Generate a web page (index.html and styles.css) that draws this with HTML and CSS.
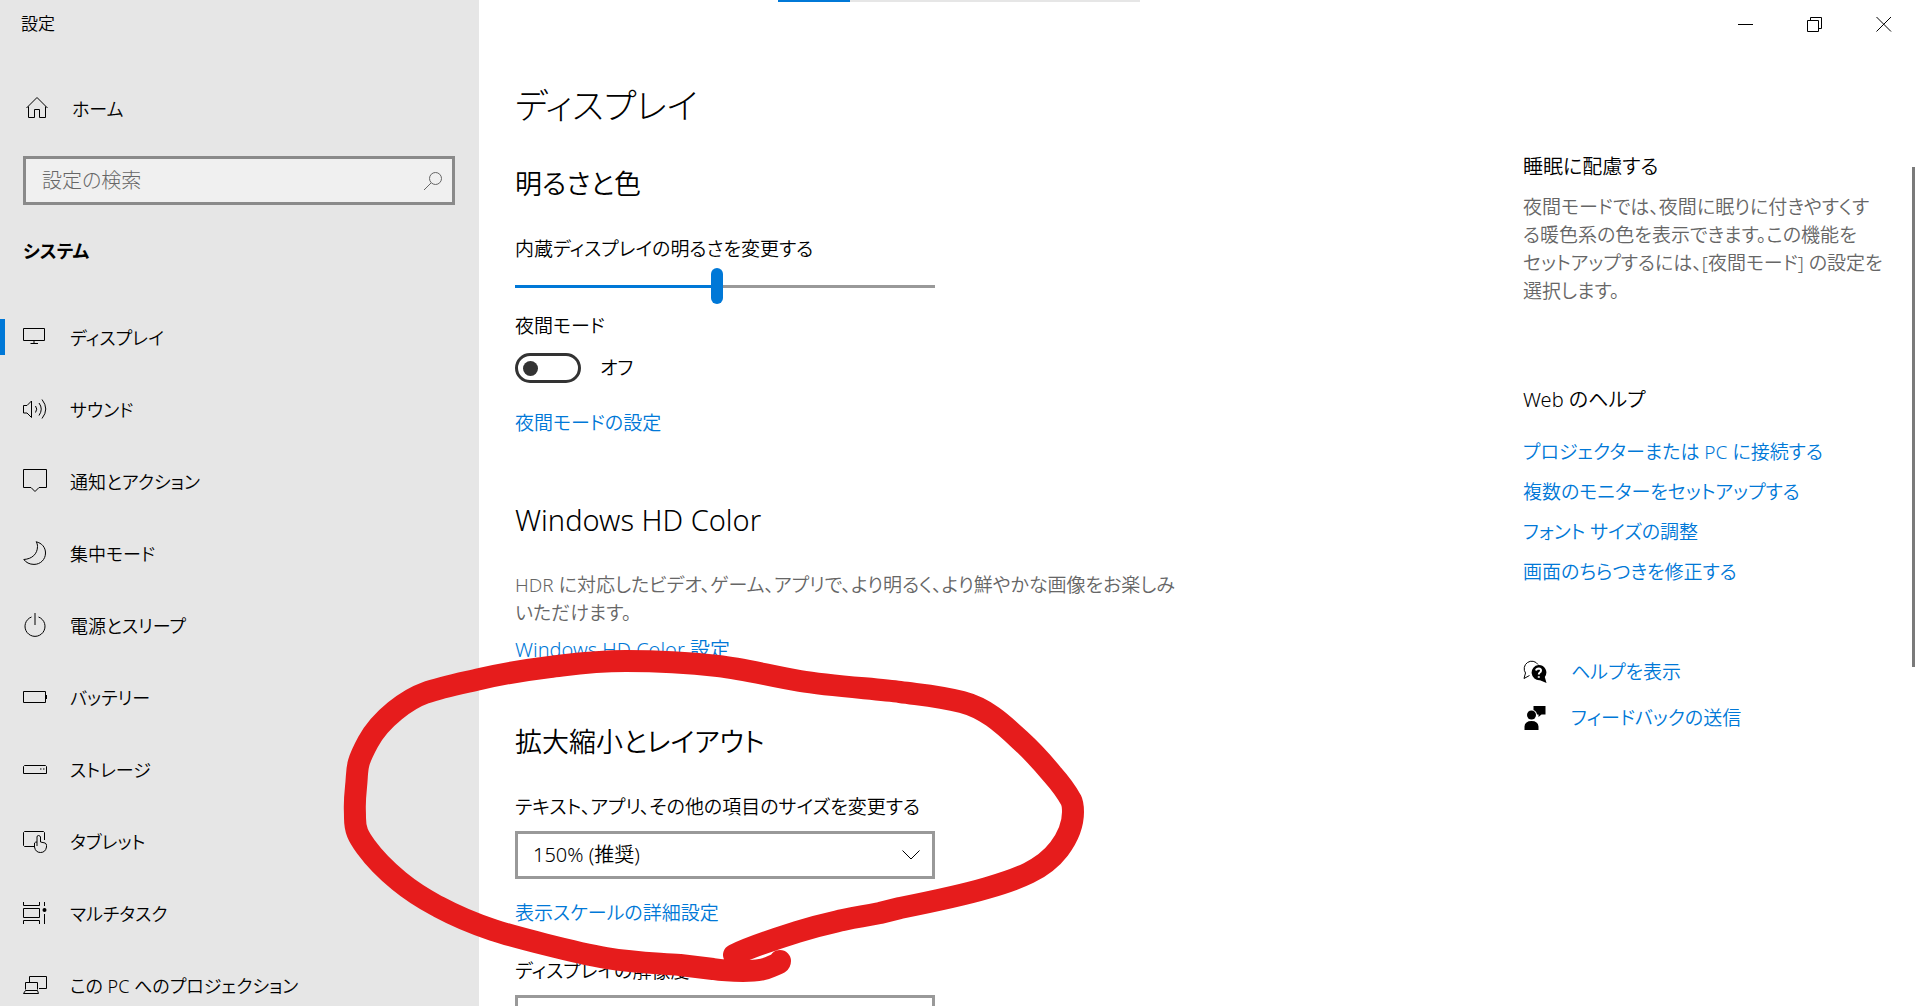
FILE: index.html
```html
<!DOCTYPE html>
<html lang="ja">
<head>
<meta charset="utf-8">
<meta name="viewport" content="width=device-width, initial-scale=1">
<title>設定</title>
<link rel="stylesheet" href="styles.css">
</head>
<body>
<div class="window">
  <aside class="sidebar">
    <div class="app-title">設定</div>
    <a class="home" href="#home">
      <svg class="icon" viewBox="0 0 24 24"><path d="M1.500 12 12 1.500 22.500 12M3.500 10.500V21.500H9.500V13.500H14.500V21.500H20.500V10.500"/></svg>
      <span>ホーム</span>
    </a>
    <div class="search">
      <input class="search-input" type="text" placeholder="設定の検索" aria-label="設定の検索">
      <svg class="search-icon" viewBox="0 0 20 20"><circle cx="12.500" cy="7.500" r="6"/><path d="M8 12 1 19"/></svg>
    </div>
    <h2 class="category">システム</h2>
    <nav class="nav">
      <a class="nav-item active" href="#display"><svg class="icon" viewBox="0 0 24 24"><path d="M.5 3.500H21.500V15.500H.5ZM11 15.500V18.500M7.500 18.500H15"/></svg><span>ディスプレイ</span></a>
      <a class="nav-item" href="#sound"><svg class="icon" viewBox="0 0 24 24"><path d="M.5 8.500H4L8.500 4V20.500L4 16H.5ZM12.500 9Q15 12 12.500 15.500M16 6Q20.500 12 16 18.500M19 2.500Q26.500 12 19 21.500"/></svg><span>サウンド</span></a>
      <a class="nav-item" href="#notifications"><svg class="icon" viewBox="0 0 24 24"><path d="M.5 .5H23.500V18.500H16L12 22.500 8 18.500H.5Z"/></svg><span>通知とアクション</span></a>
      <a class="nav-item" href="#focus"><svg class="icon" viewBox="0 0 24 24"><path d="M13 .8C19 2 22.500 6.500 22.500 12 22.500 18.500 17.500 23.400 11 23.400 6.500 23.400 3 21.500 .8 18.500 9 18 14.500 13 14.500 5.500 14.500 3.500 14 2 13 .8Z"/></svg><span>集中モード</span></a>
      <a class="nav-item" href="#power"><svg class="icon" viewBox="0 0 24 24"><path d="M12 0V12M8.500 4A10 10 0 1 0 15.500 4"/></svg><span>電源とスリープ</span></a>
      <a class="nav-item" href="#battery"><svg class="icon" viewBox="0 0 24 24"><path d="M.5 6.500H22.500V17.500H.5Z"/><path d="M23.500 10V14" /></svg><span>バッテリー</span></a>
      <a class="nav-item" href="#storage"><svg class="icon" viewBox="0 0 24 24"><path d="M1.500 8.500H22.500L23.500 9.500V16.500H.5V9.500ZM17 12H18.500M20 12H21.500"/></svg><span>ストレージ</span></a>
      <a class="nav-item" href="#tablet"><svg class="icon" viewBox="0 0 24 24"><path d="M11 17.500H1.500L.5 16.500V3.500L1.500 2.500H20.500L21.500 3.500V11M14 17V8Q14 6.500 15.500 6.500T17.500 8V13L22 14Q23.500 14.500 23.500 16.500V18Q22.500 23.500 17.500 23.500 12.500 23.500 11.500 18V14Q12 13 14 13"/></svg><span>タブレット</span></a>
      <a class="nav-item" href="#multitask"><svg class="icon" viewBox="0 0 24 24"><path d="M.5 1V4.500H16.500V1M.5 7.500H16.500V16.500H.5ZM.5 23V19.500H16.500V23M21.500 1V5M21.500 13V23"/><circle class="solid" cx="21.500" cy="9" r="2"/></svg><span>マルチタスク</span></a>
      <a class="nav-item" href="#projection"><svg class="icon" viewBox="0 0 24 24"><path d="M6.500 9V3.500H23.500V15.500H16M2.500 16.500V9.500H14.500V16.500M2.500 17.500H14.500L15.500 20.500H.5Z"/></svg><span>この PC へのプロジェクション</span></a>
    </nav>
  </aside>

  <div class="content">
    <div class="progress"><div class="progress-value"></div></div>
    <div class="caption-buttons">
      <button class="caption" type="button" aria-label="最小化"><svg viewBox="0 0 16 16"><path d="M0 8.500H15"/></svg></button>
      <button class="caption" type="button" aria-label="元に戻す"><svg viewBox="0 0 16 16"><path d="M.5 4.500H11.500V15.500H.5ZM3.500 4V1.500H14.500V12.500H12"/></svg></button>
      <button class="caption" type="button" aria-label="閉じる"><svg viewBox="0 0 16 16"><path d="M.5 1 15 15.500M15 1 .5 15.500"/></svg></button>
    </div>

    <div class="columns">
      <main class="main">
        <h1 class="page-title">ディスプレイ</h1>

        <section class="section brightness">
          <h2 class="section-title">明るさと色</h2>
          <label class="label" for="brightness">内蔵ディスプレイの明るさを変更する</label>
          <input class="slider" id="brightness" type="range" min="0" max="100" value="48">
          <div class="label" id="night-label">夜間モード</div>
          <div class="toggle-row">
            <input class="toggle" id="night" type="checkbox" aria-labelledby="night-label">
            <label for="night">オフ</label>
          </div>
          <a class="link" href="#night">夜間モードの設定</a>
        </section>

        <section class="section">
          <h2 class="section-title latin-title">Windows HD Color</h2>
          <p class="description">HDR に対応したビデオ、ゲーム、アプリで、より明るく、より鮮やかな画像をお楽しみ<br>いただけます。</p>
          <a class="link latin-link" href="#hdr">Windows HD Color 設定</a>
        </section>

        <section class="section">
          <h2 class="section-title">拡大縮小とレイアウト</h2>
          <label class="label" for="scale">テキスト、アプリ、その他の項目のサイズを変更する</label>
          <div class="select-box">
            <select class="select" id="scale"><option>150% (推奨)</option></select>
            <svg class="chevron" viewBox="0 0 18 10"><path d="M.5 .5 9 9 17.500 .5"/></svg>
          </div>
          <a class="link scale-link" href="#scaling">表示スケールの詳細設定</a>
          <label class="label" for="resolution">ディスプレイの解像度</label>
          <div class="select-box">
            <select class="select" id="resolution"><option>1920 × 1080 (推奨)</option></select>
            <svg class="chevron" viewBox="0 0 18 10"><path d="M.5 .5 9 9 17.500 .5"/></svg>
          </div>
        </section>
      </main>

      <aside class="related">
        <h3 class="related-title">睡眠に配慮する</h3>
        <p class="tip">夜間モードでは、夜間に眠りに付きやすくす<br>る暖色系の色を表示できます。この機能を<br>セットアップするには、[夜間モード] の設定を<br>選択します。</p>
        <h3 class="related-title">Web のヘルプ</h3>
        <ul class="help-links">
          <li><a href="#projector">プロジェクターまたは PC に接続する</a></li>
          <li><a href="#monitors">複数のモニターをセットアップする</a></li>
          <li><a href="#font-size">フォント サイズの調整</a></li>
          <li><a href="#flicker">画面のちらつきを修正する</a></li>
        </ul>
        <a class="support" href="#help">
          <svg class="icon" viewBox="0 0 24 24"><path d="M6.500 15.500 1 18.500 2.500 13A7.500 7.500 0 1 1 15 4.500"/><path class="solid" d="M15.500 5A7.500 7.500 0 1 0 17 20.200L23.500 23 21.800 17A7.500 7.500 0 0 0 15.500 5Z"/><path class="mark" d="M13 10.500Q13.500 8.500 15.800 8.500 18 8.700 18 10.500 18 11.800 16.800 12.500 15.800 13.200 15.800 14.500M15.800 16.200V17.800"/></svg>
          <span>ヘルプを表示</span>
        </a>
        <a class="support" href="#feedback">
          <svg class="icon" viewBox="0 0 24 24"><g class="solid"><circle cx="8.500" cy="9" r="4.500"/><path d="M1.500 24V20.500Q2 15 8.500 15T15.500 20.500V24ZM10.500 0H22.500V8.500H18.500L15.500 11V8.500H14Q13.500 5 10.500 4Z"/></g></svg>
          <span>フィードバックの送信</span>
        </a>
      </aside>
    </div>
    <div class="scroll-thumb"></div>
  </div>

  <svg class="annotation" viewBox="0 0 1918 1006" aria-hidden="true">
    <path d="M734 955C752 946 775 939 797 932S825 924 843 920 861 917 880 913L900 908C930 902 960 896 987 888 1018 879 1043 870 1059 849 1068 837 1073 824 1073 812 1073 807 1073 804 1071 800 1066 791 1060 783 1052 774 1042 762 1031 750 1020 740 1001 722 985 708 962 702S922 695 900 692 830 686 800 681 745 669 718 666 660 661 626 661 575 664 550 667 502 674 480 679 442 687 425 693 381 718 368 742 358 768 356 787 355 806 355 818 358 836 366 847 382 867 399 881 426 900 439 907 475 924 493 930 576 953 606 958 656 963 680 965L713 969C725 971 734 971 743 971S764 970 770 967 780 964 780 961"/>
  </svg>
</div>
</body>
</html>
```
FILE: styles.css
```css
* {
  box-sizing: border-box;
}

body {
  margin: 0;
  background: #fff;
  color: #000;
  font-family: "Noto Sans", "Noto Sans CJK JP", sans-serif;
  font-size: 19px;
  font-weight: 350;
  line-height: 28px;
  font-feature-settings: "palt";
}

h1, h2, h3, p, ul {
  margin: 0;
  padding: 0;
  font-weight: 350;
}

a {
  color: #0078d7;
  text-decoration: none;
}

input, select, button {
  font: inherit;
  font-feature-settings: inherit;
  color: inherit;
}

svg {
  fill: none;
  stroke: #000;
}

.window {
  position: relative;
  display: flex;
  height: 100vh;
  overflow: hidden;
}

/* Left navigation */
.sidebar {
  flex: 0 0 479px;
  background: #e6e6e6;
}

.app-title {
  padding: 10px 21px;
  font-size: 17px;
}

.home {
  display: flex;
  align-items: center;
  gap: 23px;
  height: 72px;
  margin: 24px 0 12px;
  padding-left: 25px;
  color: #000;
  font-size: 18px;
}

.icon {
  flex: none;
  width: 24px;
  height: 24px;
}

.solid {
  fill: #000;
  stroke: none;
}

.search {
  position: relative;
  margin: 0 24px 0 23px;
}

.search-input {
  display: block;
  width: 100%;
  height: 49px;
  padding: 0 16px;
  border: 3px solid #8a8a8a;
  border-radius: 0;
  background: #f0f0f0;
  font-size: 20px;
  font-weight: 300;
}

.search-input::placeholder {
  color: #666;
  opacity: 1;
}

.search-icon {
  position: absolute;
  top: 15px;
  right: 12px;
  width: 20px;
  height: 20px;
  stroke: #666;
}

.category {
  margin: 32px 23px 36px;
  font-size: 18px;
  font-weight: 700;
}

.nav-item {
  display: flex;
  align-items: center;
  gap: 23px;
  height: 72px;
  padding-left: 23px;
  color: #000;
  font-size: 18px;
}

.nav-item span,
.home span {
  padding-top: 2px;
}

.nav-item.active {
  background: linear-gradient(#0078d7, #0078d7) 0 center / 5px 36px no-repeat;
}

/* Right pane */
.content {
  position: relative;
  flex: 1;
  min-width: 0;
}

.progress {
  position: absolute;
  top: 0;
  left: 299px;
  width: 362px;
  height: 2px;
  background: #e6e6e6;
}

.progress-value {
  width: 20%;
  height: 100%;
  background: #0078d7;
}

.caption-buttons {
  display: flex;
  justify-content: flex-end;
}

.caption {
  display: flex;
  align-items: center;
  justify-content: center;
  width: 69px;
  height: 48px;
  padding: 0;
  border: 0;
  background: none;
}

.caption svg {
  width: 16px;
  height: 16px;
}

.columns {
  display: flex;
  justify-content: space-between;
  padding: 0 20px 0 36px;
}

.main {
  flex: 0 1 680px;
  padding-top: 31px;
}

.page-title {
  font-size: 35px;
  font-weight: 300;
  line-height: 54px;
}

.section {
  margin-bottom: 58px;
}

.brightness {
  margin-bottom: 63px;
}

.section-title {
  margin: 31px 0;
  font-size: 27px;
  line-height: 40px;
}

.latin-title {
  font-size: 29px;
}

.label {
  display: block;
}

.slider {
  display: block;
  width: 420px;
  height: 36px;
  margin: 5px 0 8px;
  appearance: none;
  background: none;
}

.slider::-webkit-slider-runnable-track {
  height: 3px;
  background: linear-gradient(90deg, #0078d7 48%, #999 48%);
}

.slider::-webkit-slider-thumb {
  width: 12px;
  height: 36px;
  margin-top: -17px;
  appearance: none;
  border-radius: 6px;
  background: #0078d7;
}

.toggle-row {
  display: flex;
  align-items: center;
  gap: 19px;
  margin: 13px 0 26px;
}

.toggle {
  display: flex;
  align-items: center;
  width: 66px;
  height: 30px;
  margin: 0;
  padding-left: 5px;
  appearance: none;
  border: 3px solid #333;
  border-radius: 15px;
}

.toggle::before {
  content: "";
  width: 15px;
  height: 15px;
  border-radius: 50%;
  background: #333;
}

.link {
  display: block;
}

.latin-link {
  font-size: 20px;
}

.description, .tip {
  color: #666;
  white-space: nowrap;
}

.description {
  margin-bottom: 9px;
}

.select-box {
  position: relative;
  width: 420px;
  margin: 10px 0 20px;
}

.select {
  display: block;
  width: 100%;
  height: 48px;
  padding: 0 15px;
  appearance: none;
  border: 3px solid #999;
  border-radius: 0;
  background: #fff;
  font-size: 20px;
}

.chevron {
  position: absolute;
  top: 19px;
  right: 15px;
  width: 18px;
  height: 10px;
  pointer-events: none;
}

.scale-link {
  margin-bottom: 30px;
}

.related {
  flex: 0 0 375px;
  padding-top: 105px;
}

.related-title {
  font-size: 20px;
}

.tip {
  margin: 12px 0 81px;
}

.help-links {
  display: grid;
  gap: 12px;
  margin: 24px 0 72px;
  list-style: none;
}

.support {
  display: flex;
  align-items: center;
  gap: 24px;
  margin-bottom: 18px;
}

.mark {
  stroke: #fff;
  stroke-width: 2;
}

.scroll-thumb {
  position: absolute;
  top: 167px;
  right: 3px;
  width: 3px;
  height: 500px;
  background: #7a7a7a;
}

/* Hand-drawn marker over the scaling section */
.annotation {
  position: absolute;
  top: 0;
  left: 0;
  width: 1918px;
  height: 1006px;
  stroke: #e61c1c;
  stroke-width: 22;
  stroke-linecap: round;
  stroke-linejoin: round;
  pointer-events: none;
}
```
